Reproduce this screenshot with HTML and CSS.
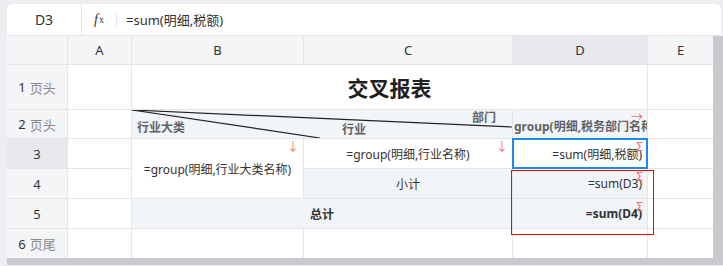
FILE: index.html
```html
<!DOCTYPE html>
<html lang="zh-CN">
<head>
    <meta charset="UTF-8">
    <title>交叉报表</title>
    <link rel="stylesheet" href="styles.css">
</head>
<body>
    <div class="sheet">
        <div class="formula-bar">
            <div class="cell-name">D3</div>
            <div class="fx"><i>f</i><sub>x</sub></div>
            <div class="formula">=sum(明细,税额)</div>
        </div>

        <div class="grid-wrap">
            <div class="grid">
                <!-- 列头 -->
                <div class="hd corner"></div>
                <div class="hd">A</div>
                <div class="hd">B</div>
                <div class="hd">C</div>
                <div class="hd active">D</div>
                <div class="hd">E</div>

                <!-- 第1行 -->
                <div class="rh">1 <span>页头</span></div>
                <div class="c"></div>
                <div class="c title span3">交叉报表</div>
                <div class="c"></div>

                <!-- 第2行 -->
                <div class="rh">2 <span>页头</span></div>
                <div class="c"></div>
                <div class="c tint span2 diag">
                    <svg class="diag-lines" width="380" height="28" viewBox="0 0 380 28">
                        <line x1="0" y1="0" x2="380" y2="17" stroke="#222" stroke-width="1.2"/>
                        <line x1="0" y1="0" x2="188" y2="28" stroke="#222" stroke-width="1.2"/>
                    </svg>
                    <span class="lbl lbl-dept">部门</span>
                    <span class="lbl lbl-ind">行业</span>
                    <span class="lbl lbl-cat">行业大类</span>
                </div>
                <div class="c tint head-text">group(明细,税务部门名称)<em class="mark">→</em></div>
                <div class="c"></div>

                <!-- 第3行 -->
                <div class="rh active">3</div>
                <div class="c"></div>
                <div class="c rows2 center">=group(明细,行业大类名称)<em class="mark">↓</em></div>
                <div class="c center">=group(明细,行业名称)<em class="mark">↓</em></div>
                <div class="c right selected">=sum(明细,税额)<em class="mark">Σ</em></div>
                <div class="c"></div>

                <!-- 第4行 -->
                <div class="rh">4</div>
                <div class="c"></div>
                <div class="c tint center">小计</div>
                <div class="c tint right">=sum(D3)<em class="mark">Σ</em></div>
                <div class="c"></div>

                <!-- 第5行 -->
                <div class="rh">5</div>
                <div class="c"></div>
                <div class="c tint span2 center bold">总计</div>
                <div class="c tint right bold">=sum(D4)<em class="mark">Σ</em></div>
                <div class="c"></div>

                <!-- 第6行 -->
                <div class="rh">6 <span>页尾</span></div>
                <div class="c"></div>
                <div class="c"></div>
                <div class="c"></div>
                <div class="c"></div>
                <div class="c"></div>
            </div>
            <div class="vscroll"></div>
            <div class="range-box"></div>
        </div>
        <div class="hscroll"></div>
    </div>
</body>
</html>
```

FILE: styles.css
```css
:root {
    --line: #e3e5e8;
    --head-bg: #f4f5f7;
    --head-active: #e8e9ec;
    --tint: #f2f5f7;
    --mark: #f56c6c;
    --scroll: #c9cacd;
}
body {
    margin: 0;
    background: #eceef1;
    font-family: "Noto Sans", "Noto Sans CJK SC", sans-serif;
    color: #333;
    overflow: hidden;
}
.sheet {
    padding: 4px 0 0 7px;
}
.formula-bar {
    width: 714px;
    height: 31px;
    display: flex;
    align-items: center;
    background: white;
    border-radius: 6px 6px 0 0;
    border-bottom: 1px solid var(--line);
}
.cell-name {
    width: 74px;
    height: 100%;
    display: flex;
    align-items: center;
    justify-content: center;
    border-right: 1px solid var(--line);
    font-size: 14px;
}
.fx {
    width: 34px;
    height: 14px;
    margin-right: 9px;
    display: flex;
    align-items: center;
    justify-content: center;
    border-right: 1px solid var(--line);
    font-family: "Liberation Serif", serif;
    font-size: 14px;
    line-height: 1;
}
.fx sub {
    font-size: 10px;
    vertical-align: 5px;
    margin-left: 1px;
}
.formula {
    font-size: 13px;
}
.grid-wrap {
    position: relative;
    display: flex;
    width: 716px;
}
.grid {
    display: grid;
    grid-template-columns: 60px 63px 171px 208px 134px 65px;
    grid-template-rows: 28px 44px 28px 29px 29px 29px 29px;
    gap: 1px;
    background: var(--line);
    width: 706px;
}
.vscroll {
    width: 10px;
    background: var(--scroll);
}
.hscroll {
    height: 7px;
    width: 716px;
    background: var(--scroll);
}
.hd, .rh {
    background: var(--head-bg);
    display: flex;
    align-items: center;
    justify-content: center;
    font-size: 13px;
}
.rh span {
    color: #8a8a8a;
    margin-left: 4px;
}
.hd.active, .rh.active {
    background: var(--head-active);
}
.c {
    background: white;
    position: relative;
    display: flex;
    align-items: center;
    font-size: 12px;
    white-space: nowrap;
    overflow: hidden;
}
.tint {
    background: var(--tint);
}
.span2 {
    grid-column: span 2;
}
.span3 {
    grid-column: span 3;
}
.rows2 {
    grid-row: span 2;
}
.center {
    justify-content: center;
}
.right {
    justify-content: flex-end;
    padding-right: 5px;
}
.bold {
    font-weight: bold;
}
.title {
    justify-content: center;
    font-size: 21px;
    font-weight: bold;
    color: #1f1f1f;
}
.diag {
    display: block;
}
.diag-lines {
    position: absolute;
    left: 0;
    top: 0;
}
.lbl, .head-text {
    font-weight: bold;
    color: #606266;
}
.lbl {
    position: absolute;
    font-size: 12px;
    line-height: 14px;
}
.lbl-dept {
    right: 16px;
    top: 1px;
}
.lbl-ind {
    left: 210px;
    top: 13px;
}
.lbl-cat {
    left: 5px;
    top: 11px;
}
.head-text {
    padding-left: 1px;
    padding-top: 4px;
    font-size: 12px;
}
.mark {
    position: absolute;
    top: 2px;
    right: 4px;
    font-style: normal;
    font-size: 12px;
    line-height: 12px;
    color: var(--mark);
    font-weight: normal;
}
.selected {
    outline: 2px solid #1a8cf0;
    outline-offset: -1px;
    overflow: visible;
}
.range-box {
    position: absolute;
    left: 504px;
    top: 134px;
    width: 141px;
    height: 63px;
    border: 1px solid #f00;
}
```
